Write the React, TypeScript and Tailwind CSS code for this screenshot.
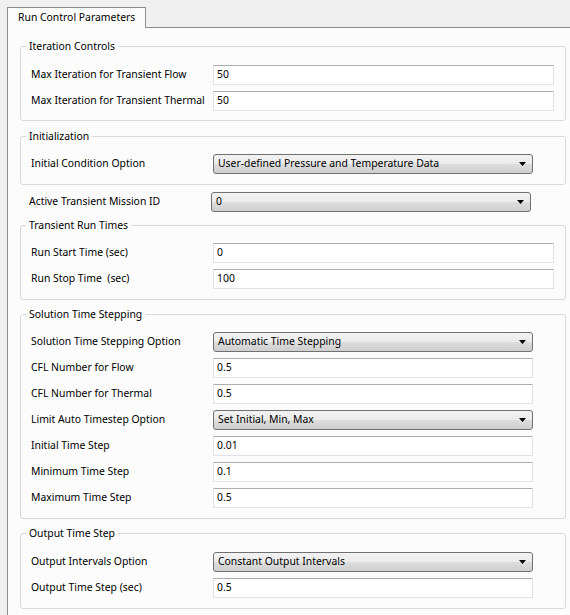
import type { ReactNode } from 'react'

type Row =
  | { kind: 'input'; label: string; value: string }
  | { kind: 'combo'; label: string; value: string }

function TextBox({ value, wide }: { value: string; wide: boolean }) {
  return (
    <div
      className={`flex h-[20px] items-center border border-[#e2e3ea] border-t-[#abadb3] bg-white pl-[3px] ${
        wide ? 'w-[341px]' : 'w-[320px]'
      }`}
    >
      {value}
    </div>
  )
}

function Combo({ value }: { value: string }) {
  return (
    <div className="flex h-[20px] w-[320px] items-center justify-between rounded-[3px] border border-[#707070] bg-[linear-gradient(#f2f2f2_0%,#ebebeb_50%,#dddddd_50%,#cfcfcf_100%)] pl-[4px] pr-[5px]">
      <span>{value}</span>
      <svg width="8" height="5" viewBox="0 0 8 5" className="mt-px">
        <path d="M0 0h7L3.5 4z" fill="#000" />
      </svg>
    </div>
  )
}

function Group({
  title,
  rows,
  wide,
  top = 11,
  className = '',
}: {
  title: string
  rows: Row[]
  wide: boolean
  top?: number
  className?: string
}) {
  return (
    <fieldset
      className={`ml-[12px] w-[546px] rounded-[3px] border border-[#d9d9d9] px-0 ${className}`}
    >
      <legend className="ml-[5px] px-[3px] leading-[14px]">{title}</legend>
      <div className={`flex flex-col gap-[6px] pl-[10px] ${top === 12 ? 'pt-[12px]' : 'pt-[11px]'}`}>
        {rows.map((r) => (
          <Field key={r.label} label={r.label}>
            {r.kind === 'combo' ? <Combo value={r.value} /> : <TextBox value={r.value} wide={wide} />}
          </Field>
        ))}
      </div>
    </fieldset>
  )
}

function Field({ label, children }: { label: string; children: ReactNode }) {
  return (
    <div className="flex h-[20px] items-center">
      <div className="w-[182px] whitespace-pre">{label}</div>
      {children}
    </div>
  )
}

export default function App() {
  return (
    <div className="h-[615px] overflow-hidden bg-[#f0f0f0] pl-[7px] pt-[7px] font-['Noto_Sans',sans-serif] text-[10.4px] text-black">
      <div className="relative z-10 -mb-px flex h-[21px] w-[139px] items-center whitespace-nowrap border border-b-0 border-[#8c8c8c] bg-[#fcfcfc] pl-[10px]">
        Run Control Parameters
      </div>
      <div className="h-full border-l border-t border-[#8c8c8c] bg-[#fcfcfc] pt-[11px]">
        <Group
          title="Iteration Controls"
          wide
          top={12}
          className="pb-[9px]"
          rows={[
            { kind: 'input', label: 'Max Iteration for Transient Flow', value: '50' },
            { kind: 'input', label: 'Max Iteration for Transient Thermal', value: '50' },
          ]}
        />
        <Group
          title="Initialization"
          wide={false}
          className="mt-[8px] pb-[10px]"
          rows={[
            {
              kind: 'combo',
              label: 'Initial Condition Option',
              value: 'User-defined Pressure and Temperature Data',
            },
          ]}
        />
        <div className="mt-[7px] flex h-[20px] items-center pl-[21px]">
          <div className="w-[182px]">Active Transient Mission ID</div>
          <Combo value="0" />
        </div>
        <Group
          title="Transient Run Times"
          wide
          className="mt-[6px] pb-[10px]"
          rows={[
            { kind: 'input', label: 'Run Start Time (sec)', value: '0' },
            { kind: 'input', label: 'Run Stop Time  (sec)', value: '100' },
          ]}
        />
        <Group
          title="Solution Time Stepping"
          wide={false}
          className="mt-[7px] pb-[10px]"
          rows={[
            { kind: 'combo', label: 'Solution Time Stepping Option', value: 'Automatic Time Stepping' },
            { kind: 'input', label: 'CFL Number for Flow', value: '0.5' },
            { kind: 'input', label: 'CFL Number for Thermal', value: '0.5' },
            { kind: 'combo', label: 'Limit Auto Timestep Option', value: 'Set Initial, Min, Max' },
            { kind: 'input', label: 'Initial Time Step', value: '0.01' },
            { kind: 'input', label: 'Minimum Time Step', value: '0.1' },
            { kind: 'input', label: 'Maximum Time Step', value: '0.5' },
          ]}
        />
        <Group
          title="Output Time Step"
          wide={false}
          top={12}
          className="mt-[7px] pb-[10px]"
          rows={[
            { kind: 'combo', label: 'Output Intervals Option', value: 'Constant Output Intervals' },
            { kind: 'input', label: 'Output Time Step (sec)', value: '0.5' },
          ]}
        />
      </div>
    </div>
  )
}
